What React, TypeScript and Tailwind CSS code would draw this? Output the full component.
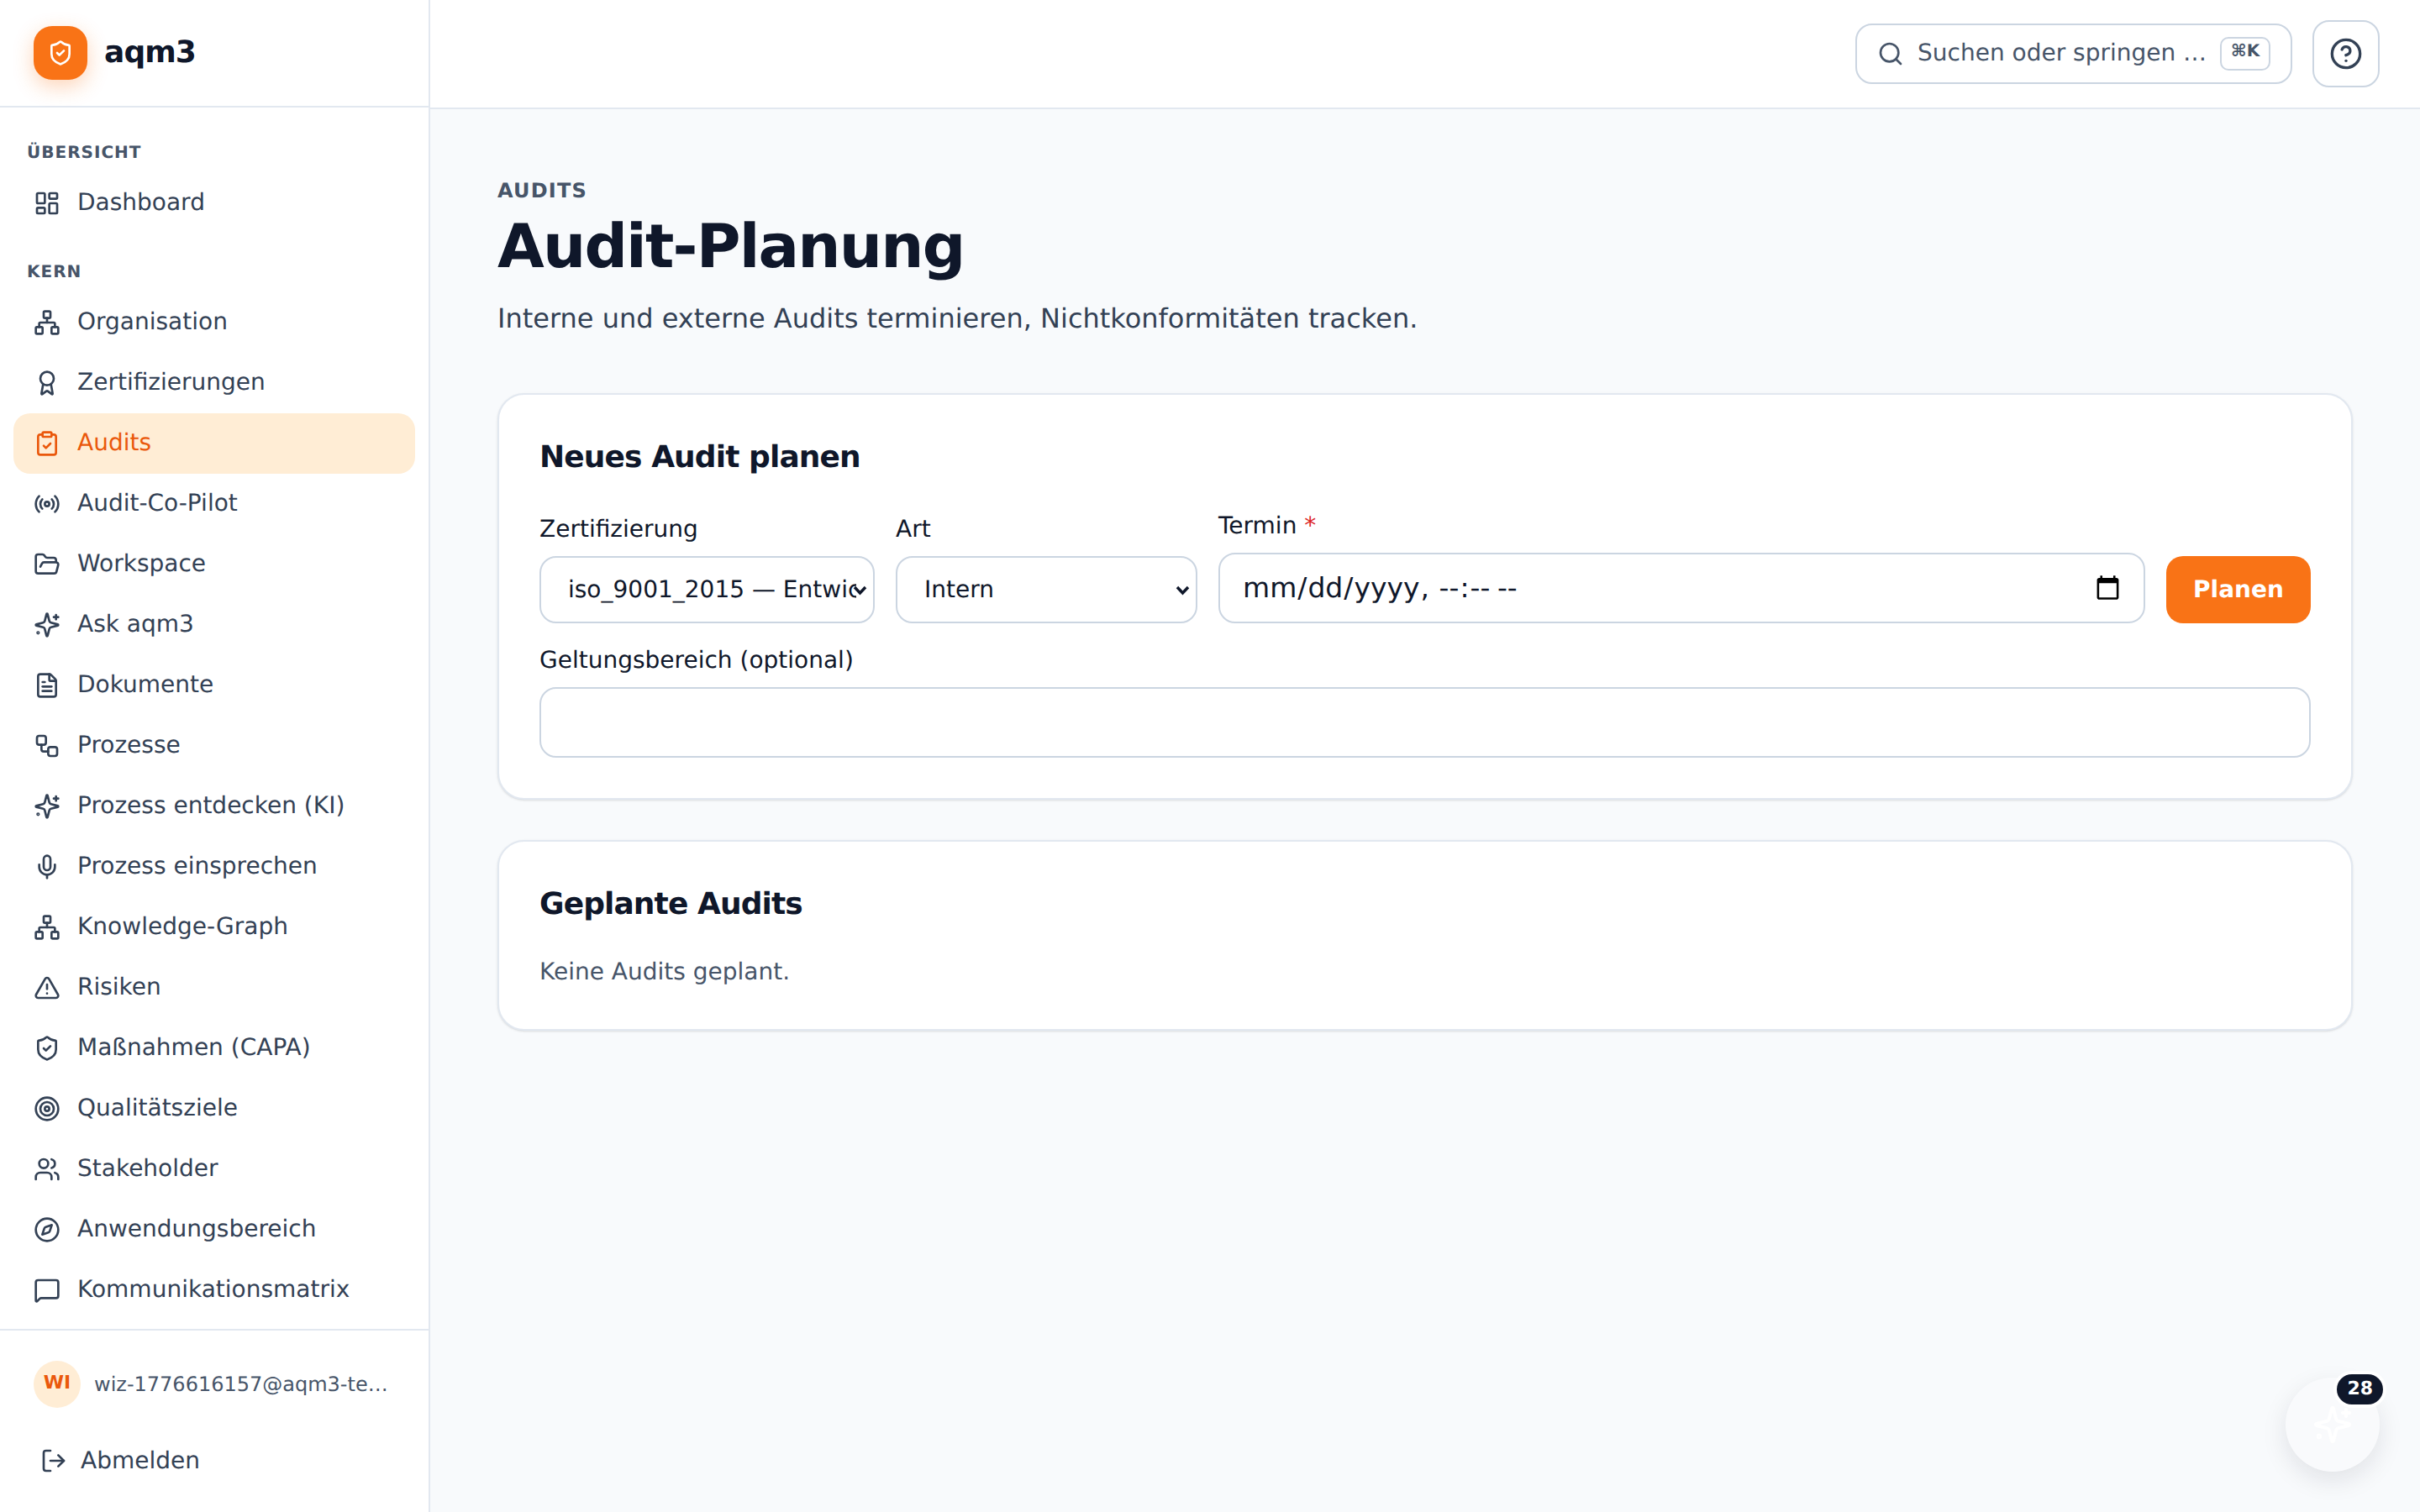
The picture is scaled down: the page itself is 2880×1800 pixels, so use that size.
import {
  Award,
  CircleHelp,
  ClipboardCheck,
  Compass,
  FileText,
  FolderOpen,
  LayoutDashboard,
  LogOut,
  MessageSquare,
  Mic,
  Network,
  Radio,
  Search,
  ShieldCheck,
  Target,
  TriangleAlert,
  Users,
  Workflow,
} from "lucide-react";

function Sparkle({ className }: { className?: string }) {
  return (
    <svg
      viewBox="0 0 24 24"
      fill="none"
      stroke="currentColor"
      strokeWidth={2}
      strokeLinecap="round"
      strokeLinejoin="round"
      className={className}
    >
      <path d="M9.937 15.5A2 2 0 0 0 8.5 14.063l-6.135-1.582a.5.5 0 0 1 0-.962L8.5 9.936A2 2 0 0 0 9.937 8.5l1.582-6.135a.5.5 0 0 1 .963 0L14.063 8.5A2 2 0 0 0 15.5 9.937l6.135 1.581a.5.5 0 0 1 0 .964L15.5 14.063a2 2 0 0 0-1.437 1.437l-1.582 6.135a.5.5 0 0 1-.963 0z" />
      <path d="M20 3v4" />
      <path d="M22 5h-4" />
      <circle cx="4" cy="19" r="0.6" />
    </svg>
  );
}

function SelectChevron() {
  return (
    <svg
      viewBox="0 0 17 12"
      fill="none"
      stroke="#0f172a"
      strokeWidth={3.4}
      className="pointer-events-none absolute top-[35px] right-[9px] h-3 w-[17px]"
    >
      <path d="M2 2l6.5 7L15 2" />
    </svg>
  );
}

const coreItems = [
  { label: "Organisation", icon: Network },
  { label: "Zertifizierungen", icon: Award },
  { label: "Audits", icon: ClipboardCheck, active: true },
  { label: "Audit-Co-Pilot", icon: Radio },
  { label: "Workspace", icon: FolderOpen },
  { label: "Ask aqm3", icon: Sparkle },
  { label: "Dokumente", icon: FileText },
  { label: "Prozesse", icon: Workflow },
  { label: "Prozess entdecken (KI)", icon: Sparkle },
  { label: "Prozess einsprechen", icon: Mic },
  { label: "Knowledge-Graph", icon: Network },
  { label: "Risiken", icon: TriangleAlert },
  { label: "Maßnahmen (CAPA)", icon: ShieldCheck },
  { label: "Qualitätsziele", icon: Target },
  { label: "Stakeholder", icon: Users },
  { label: "Anwendungsbereich", icon: Compass },
  { label: "Kommunikationsmatrix", icon: MessageSquare },
];

function NavItem({
  label,
  icon: Icon,
  active,
}: {
  label: string;
  icon: React.ComponentType<{ className?: string }>;
  active?: boolean;
}) {
  return (
    <a
      className={
        active
          ? "flex h-[72px] items-center gap-5 rounded-[20px] bg-[#ffedd5] px-6 text-[28px] text-[#ea580c]"
          : "flex h-[72px] items-center gap-5 rounded-[20px] px-6 text-[28px] text-[#334155]"
      }
    >
      <Icon className="h-8 w-8 shrink-0" />
      <span className="pb-[2px]">{label}</span>
    </a>
  );
}

function SectionLabel({ children }: { children: React.ReactNode }) {
  return (
    <p className="mb-[10px] px-4 text-[20px] leading-[30px] font-bold tracking-[0.05em] text-[#475569] uppercase">
      {children}
    </p>
  );
}

function Sidebar() {
  return (
    <aside className="flex h-full w-[512px] shrink-0 flex-col border-r-2 border-[#e2e8f0] bg-white">
      <div className="flex h-[128px] shrink-0 items-center gap-5 border-b-2 border-[#e2e8f0] px-10">
        <div className="flex h-16 w-16 items-center justify-center rounded-[22px] bg-[#f97316] text-white shadow-[0_8px_24px_rgba(249,115,22,0.3)]">
          <ShieldCheck className="h-8 w-8" />
        </div>
        <span className="text-[36px] font-bold tracking-tight text-[#0f172a]">aqm3</span>
      </div>
      <nav className="min-h-0 flex-1 overflow-hidden px-4 pt-[38px]">
        <SectionLabel>Übersicht</SectionLabel>
        <NavItem label="Dashboard" icon={LayoutDashboard} />
        <div className="h-[30px]" />
        <SectionLabel>Kern</SectionLabel>
        {coreItems.map((item) => (
          <NavItem key={item.label} {...item} />
        ))}
      </nav>
      <div className="h-[218px] shrink-0 border-t-2 border-[#e2e8f0] px-10 pt-9">
        <div className="flex items-center gap-4">
          <div className="flex h-14 w-14 shrink-0 items-center justify-center rounded-full bg-[#ffedd5] pb-1 text-[22px] font-bold text-[#ea580c]">
            WI
          </div>
          <span className="truncate text-[24px] text-[#475569]">wiz-1776616157@aqm3-test.local</span>
        </div>
        <button className="mt-[42px] ml-2 flex items-center gap-4 text-[28px] text-[#334155] [text-rendering:geometricPrecision]">
          <LogOut className="h-8 w-8" />
          Abmelden
        </button>
      </div>
    </aside>
  );
}

function TopBar() {
  return (
    <header className="flex h-[130px] shrink-0 items-center justify-end gap-6 border-b-2 border-[#e2e8f0] bg-white pr-12">
      <button className="flex h-[72px] w-[520px] items-center gap-4 rounded-[20px] border-2 border-[#cbd5e1] pl-6 text-[28px] text-[#475569] [text-rendering:geometricPrecision]">
        <Search className="h-8 w-8 shrink-0" />
        <span className="pb-[2px] whitespace-nowrap">Suchen oder springen …</span>
        <kbd className="mr-6 ml-auto flex h-10 w-[60px] shrink-0 items-center justify-center rounded-[10px] border-2 border-[#cbd5e1] pb-2 font-['DejaVu_Sans',sans-serif] text-[20px] font-bold">
          ⌘K
        </kbd>
      </button>
      <button className="flex h-20 w-20 items-center justify-center rounded-[20px] border-2 border-[#cbd5e1] text-[#334155]">
        <CircleHelp className="h-10 w-10" />
      </button>
    </header>
  );
}

function PlanForm() {
  return (
    <section className="h-[484px] rounded-[32px] border-2 border-[#e2e8f0] bg-white p-12 shadow-sm">
      <h2 className="text-[36px] leading-[54px] font-bold tracking-tight text-[#0f172a]">Neues Audit planen</h2>
      <div className="mt-[34px] flex items-end gap-[25px]">
        <label className="flex w-[399px] flex-col gap-3 text-[28px] leading-10 text-[#0f172a]">
          Zertifizierung
          <div className="relative">
            <select className="h-20 w-full appearance-none rounded-[20px] border-2 border-[#cbd5e1] bg-white pr-5 pl-8 text-[28px] [text-rendering:geometricPrecision]">
              <option>iso_9001_2015 — Entwicklung</option>
            </select>
            <SelectChevron />
          </div>
        </label>
        <label className="flex w-[359px] flex-col gap-3 text-[28px] leading-10 text-[#0f172a]">
          Art
          <div className="relative">
            <select className="h-20 w-full appearance-none rounded-[20px] border-2 border-[#cbd5e1] bg-white pr-5 pl-8 text-[28px] [text-rendering:geometricPrecision]">
              <option>Intern</option>
            </select>
            <SelectChevron />
          </div>
        </label>
        <label className="flex flex-1 flex-col gap-3 text-[28px] leading-10 text-[#0f172a]">
          <span>
            Termin <span className="text-[#dc2626]">*</span>
          </span>
          <input
            type="datetime-local"
            className="h-[84px] w-full rounded-[20px] border-2 border-[#cbd5e1] bg-white pr-6 pl-[26px] text-[33px] [text-rendering:geometricPrecision]"
          />
        </label>
        <button className="h-20 w-[172px] shrink-0 rounded-[20px] bg-[#f97316] text-[28px] font-bold text-white [text-rendering:geometricPrecision]">
          Planen
        </button>
      </div>
      <label className="mt-6 flex flex-col gap-3 text-[28px] leading-10 text-[#0f172a]">
        Geltungsbereich (optional)
        <input className="h-[84px] w-full rounded-[20px] border-2 border-[#cbd5e1] bg-white px-7 text-[32px]" />
      </label>
    </section>
  );
}

export default function App() {
  return (
    <div className="flex h-screen w-full overflow-hidden bg-[#f8fafc] font-['DejaVu_Sans',sans-serif] [text-rendering:geometricPrecision]">
      <Sidebar />
      <div className="flex min-w-0 flex-1 flex-col">
        <TopBar />
        <main className="flex-1 px-20 pt-[81px]">
          <p className="text-[24px] leading-8 font-bold tracking-wider text-[#475569] uppercase">Audits</p>
          <h1 className="mt-[10px] text-[72px] leading-[80px] font-bold tracking-tight text-[#0f172a]">Audit-Planung</h1>
          <p className="mt-[22px] text-[32px] leading-[48px] text-[#334155]">
            Interne und externe Audits terminieren, Nichtkonformitäten tracken.
          </p>
          <div className="mt-[65px]">
            <PlanForm />
          </div>
          <section className="mt-12 h-[227px] rounded-[32px] border-2 border-[#e2e8f0] bg-white p-12 shadow-sm">
            <h2 className="text-[36px] leading-[54px] font-bold tracking-tight text-[#0f172a]">Geplante Audits</h2>
            <p className="mt-[33px] text-[28px] leading-10 text-[#475569]">Keine Audits geplant.</p>
          </section>
        </main>
      </div>
      <button className="fixed right-12 bottom-12 flex h-28 w-28 items-center justify-center rounded-full bg-[#f9fafc] text-white shadow-[0_10px_30px_rgba(15,23,42,0.1)] [text-rendering:geometricPrecision]">
        <Sparkle className="h-12 w-12" />
        <span className="absolute -top-2 -right-2 rounded-full border-4 border-white bg-[#0f172a] px-[12px] text-[22px] leading-[36px] font-bold text-white">
          28
        </span>
      </button>
    </div>
  );
}
